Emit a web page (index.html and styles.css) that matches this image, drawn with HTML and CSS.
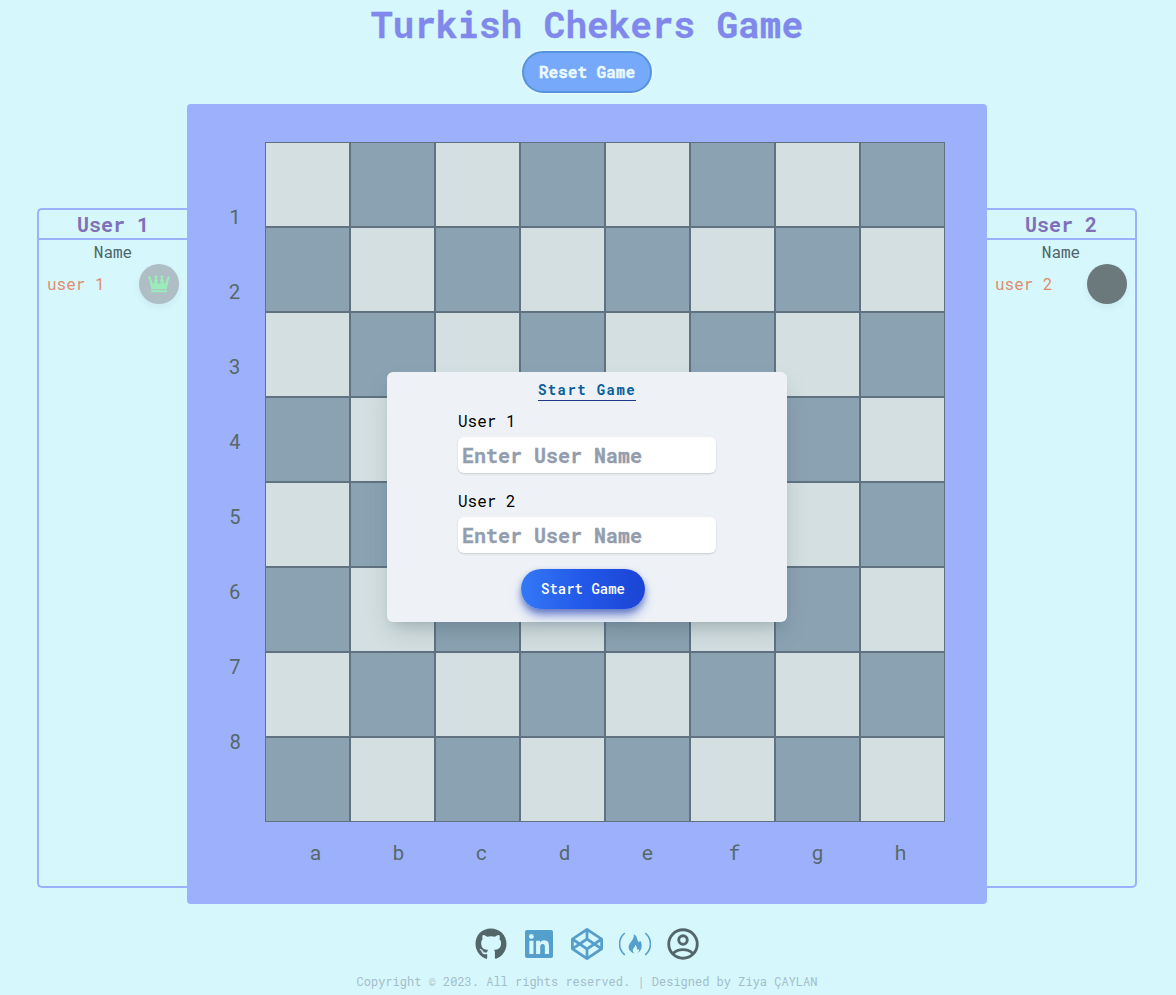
FILE: index.html
```html
<!DOCTYPE html>
<html lang="en">
<head>
<meta charset="utf-8">
<title>Turkish Chekers Game</title>
<link rel="stylesheet" href="styles.css">
</head>
<body>
<div class="page">
  <h1 class="title">Turkish Chekers Game</h1>
  <button class="reset">Reset Game</button>
  <main class="game">
    <section class="player player-left">
      <h2 class="player-title">User 1</h2>
      <div class="player-label">Name</div>
      <div class="player-row"><span>user 1</span>
        <span class="piece piece-light">
          <svg width="22" height="18" viewBox="0 0 22 18" fill="#9aecb9"><circle cx="1.5" cy="2.7" r="1.5"/><circle cx="20.5" cy="2.7" r="1.5"/><circle cx="8" cy="1.8" r="1.6"/><circle cx="14" cy="1.8" r="1.6"/><circle cx="8" cy="6" r="2"/><circle cx="14" cy="6" r="2"/><path d="M1 3 2.4 2.5 5 8.800 7 7.500V2h2v6l2 1 2-1V2h2v5.500l2 1.300 2.600-6.300 1.400.5-2.300 11.300H3.300zM3 15.200h16V17.200H3z"/></svg>
        </span>
      </div>
    </section>
    <section class="board">
      <div class="ranks"><span>1</span><span>2</span><span>3</span><span>4</span><span>5</span><span>6</span><span>7</span><span>8</span></div>
      <div class="side">
        <div class="cells" id="cells"></div>
        <div class="files"><span>a</span><span>b</span><span>c</span><span>d</span><span>e</span><span class="late">f</span><span>g</span><span>h</span></div>
      </div>
      <form class="modal">
        <h3 class="modal-title">Start Game</h3>
        <label class="field">User 1<input type="text" placeholder="Enter User Name"></label>
        <label class="field">User 2<input type="text" placeholder="Enter User Name"></label>
        <button type="button" class="start">Start Game</button>
      </form>
    </section>
    <section class="player player-right">
      <h2 class="player-title">User 2</h2>
      <div class="player-label">Name</div>
      <div class="player-row"><span>user 2</span><span class="piece piece-dark"></span></div>
    </section>
  </main>
  <footer class="footer">
    <div class="links">
      <svg class="icon gray" viewBox="0 0 496 512"><path d="M165.9 397.4c0 2-2.3 3.6-5.2 3.6-3.3.3-5.6-1.3-5.6-3.6 0-2 2.3-3.6 5.2-3.6 3-.3 5.6 1.3 5.6 3.6zm-31.1-4.5c-.7 2 1.3 4.3 4.3 4.9 2.6 1 5.6 0 6.2-2s-1.3-4.3-4.3-5.2c-2.6-.7-5.5.3-6.2 2.3zm44.2-1.7c-2.9.7-4.9 2.6-4.6 4.9.3 2 2.9 3.3 5.9 2.6 2.9-.7 4.9-2.6 4.6-4.6-.3-1.9-3-3.2-5.9-2.9zM244.8 8C106.1 8 0 113.3 0 252c0 110.9 69.8 205.8 169.5 239.2 12.8 2.3 17.3-5.6 17.3-12.1 0-6.2-.3-40.4-.3-61.4 0 0-70 15-84.7-29.8 0 0-11.4-29.1-27.8-36.6 0 0-22.9-15.7 1.6-15.4 0 0 24.9 2 38.6 25.8 21.9 38.6 58.6 27.5 72.9 20.9 2.3-16 8.8-27.1 16-33.7-55.9-6.2-112.3-14.3-112.3-110.5 0-27.5 7.6-41.3 23.6-58.9-2.6-6.5-11.1-33.3 2.6-67.9 20.9-6.5 69 27 69 27 20-5.6 41.5-8.5 62.8-8.5s42.8 2.9 62.8 8.5c0 0 48.1-33.6 69-27 13.7 34.7 5.2 61.4 2.6 67.9 16 17.7 25.8 31.5 25.8 58.9 0 96.5-58.9 104.2-114.8 110.5 9.2 7.9 17 22.9 17 46.4 0 33.7-.3 75.4-.3 83.6 0 6.5 4.6 14.4 17.3 12.1C428.2 457.8 496 362.9 496 252 496 113.3 383.5 8 244.8 8zM97.2 352.9c-1.3 1-1 3.3.7 5.2 1.6 1.6 3.9 2.3 5.2 1 1.3-1 1-3.3-.7-5.2-1.6-1.6-3.9-2.3-5.2-1zm32.4 35.6c-1.6 1.3-1 4.3 1.3 6.2 2.3 2.3 5.2 2.6 6.5 1 1.3-1.3.7-4.3-1.3-6.2-2.2-2.3-5.2-2.6-6.5-1zm-11.4-14.7c-1.6 1-1.6 3.6 0 5.9s4.3 3.3 5.6 2.3c1.6-1.3 1.6-3.9 0-6.2-1.4-2.3-4-3.3-5.6-2z"/></svg>
      <svg class="icon" viewBox="0 0 448 512"><path d="M416 32H31.9C14.3 32 0 46.5 0 64.3v383.4C0 465.5 14.3 480 31.9 480H416c17.6 0 32-14.5 32-32.3V64.3c0-17.8-14.4-32.3-32-32.3zM135.4 416H69V202.2h66.5V416zm-33.2-243c-21.3 0-38.5-17.3-38.5-38.5S80.9 96 102.2 96c21.2 0 38.5 17.3 38.5 38.5 0 21.3-17.2 38.5-38.5 38.5zm282.1 243h-66.4V312c0-24.8-.5-56.7-34.5-56.7-34.6 0-39.9 27-39.9 54.9V416h-66.4V202.2h63.7v29.2h.9c8.9-16.8 30.6-34.5 62.9-34.5 67.2 0 79.7 44.3 79.7 101.9V416z"/></svg>
      <svg class="icon" viewBox="0 0 512 512"><path d="M502.285 159.704l-234-156c-7.987-4.915-16.568-4.943-24.571 0l-234 156C3.714 163.703 0 170.847 0 177.989v155.999c0 7.143 3.714 14.286 9.715 18.286l234 156.022c7.987 4.915 16.568 4.943 24.571 0l234-156.022c6-3.999 9.715-11.143 9.715-18.286V177.989c-.001-7.142-3.715-14.286-9.716-18.285zM278 63.131l172.286 114.858-76.857 51.429L278 165.703V63.131zm-44 0v102.572l-95.429 63.715-76.857-51.429L234 63.131zM44 219.132l55.143 36.857L44 292.847v-73.715zm190 229.715L61.714 333.989l76.857-51.429L234 346.275v102.572zm22-140.858l-77.715-52 77.715-52 77.715 52-77.715 52zm22 140.858V346.275l95.429-63.715 76.857 51.429L278 448.847zm190-156l-55.143-36.857L468 219.132v73.715z"/></svg>
      <svg class="icon" viewBox="0 0 32 32"><path d="M5.3 5.5C-1 11 -1 21 5.3 26.4M26.7 5.5C33 11 33 21 26.7 26.4" fill="none" stroke="#559fcc" stroke-width="1.6" stroke-linecap="round"/><path d="M14.800 6.200c3.600 1.600 3 5 4.500 7.300.7 1.200 2 .3 1.200-1.500 2.300 2.500 2.600 4.700 1.900 8-.5 2.600-2.300 4.300-4.300 5.200 1.400-1.300 2.500-2.900 1.800-4-.8.7-2 .5-2-.7.1-1.700-.5-2.800-1.900-3.800.4 2.700-2.300 3.400-2.200 5.600 0 1.200.5 2.100 1.500 3.100-5-1.900-6.800-5.400-5-9 1.700-3.300 5-5.400 4.500-10.200z"/></svg>
      <svg class="icon outline" viewBox="0 0 24 24"><circle cx="12" cy="12" r="10.7"/><circle cx="12" cy="9" r="3.2"/><path d="M4.8 19c3.6-3.7 10.800-3.7 14.400 0"/></svg>
    </div>
    <p class="copyright">Copyright © 2023. All rights reserved. | Designed by Ziya ÇAYLAN</p>
  </footer>
</div>
<script src="board.js"></script>
</body>
</html>
```
FILE: styles.css
```css
* { box-sizing: border-box; }
html { overflow: hidden; }
body {
  margin: 0;
  background: #d6f7fc;
  color: #56686a;
  font: 16px/24px "Roboto Mono", "DejaVu Sans Mono", "Liberation Mono", monospace;
}
h1, h2, h3, p { margin: 0; }
button, input { font: inherit; }
.page { width: 1174px; height: 995px; display: flex; flex-direction: column; align-items: center; }
.title { font-size: 36px; line-height: 40px; font-weight: 700; color: #8088ec; padding-top: 4px; height: 51px; -webkit-text-stroke: .3px; }
.reset {
  width: 130px; height: 42px; padding: 0;
  border: 2px solid #5594dc; border-radius: 21px;
  background: #76a9fa; color: #ebfaff; font-weight: 700;
  -webkit-text-stroke: .4px;
  box-shadow: 0 0 2px 1px #e9fbff;
}
.game { display: flex; align-items: flex-start; margin-top: 11px; }
.player { width: 150px; height: 680px; margin-top: 104px; border: 2px solid #9db0fb; }
.player-left { border-right: 0; border-radius: 5px 0 0 5px; }
.player-right { border-left: 0; border-radius: 0 5px 5px 0; }
.player-title { height: 30px; font-size: 20px; line-height: 28px; text-align: center; color: #7f70b8; border-bottom: 2px solid #9db0fb; }
.player-label { text-align: center; color: #50666a; }
.player-row { display: flex; align-items: center; justify-content: space-between; padding: 0 8px; color: #df8d6b; }
.piece { width: 40px; height: 40px; border-radius: 50%; display: flex; align-items: center; justify-content: center; box-shadow: 0 3px 6px rgba(60, 100, 110, .08); }
.piece-light { background: #afbdc5; }
.piece-dark { background: #6b787c; }
.board { position: relative; display: flex; width: 800px; height: 800px; padding-top: 38px; border-radius: 4px; background: #9db0fb; }
.ranks { width: 78px; padding: 37px 0 0 18px; font-size: 20px; line-height: 75px; text-align: center; }
.ranks span { display: block; height: 75px; }
.cells { display: grid; grid-template-columns: repeat(8, 85px); grid-auto-rows: 85px; }
.cell { border: 1px solid #607280; background: #d3dfe0; }
.cell.dark { background: #8ba2b2; }
.files { display: flex; gap: 71px; padding: 14px 0 0 44.5px; font-size: 20px; line-height: 32px; }
.files span { width: 12px; text-align: center; }
.files .late { margin-left: 4px; }
/* Dialog floats over the centre of the board */
.modal {
  position: absolute; left: 200px; top: 268px; width: 400px; height: 250px;
  display: flex; flex-direction: column; align-items: center;
  padding-top: 8px; border-radius: 6px; background: #eef2f7; color: #000;
  box-shadow: 0 12px 25px -5px rgba(60, 80, 90, .25), 0 8px 10px -6px rgba(60, 80, 90, .15);
}
.modal-title { font-size: 14px; line-height: 20px; letter-spacing: .1em; color: #075f9c; border-bottom: 1px solid #1e3a8a; }
.field { display: flex; flex-direction: column; width: 258px; height: 80px; padding-top: 8px; }
.field input {
  width: 100%; height: 36px; margin-top: 4px; padding: 4px; border: 0; border-radius: 6px;
  background: #fff; font-size: 20px; font-weight: 700; box-shadow: 0 1px 2px rgba(0, 0, 0, .16);
}
.field input::placeholder { color: #929dad; opacity: 1; -webkit-text-stroke: .3px; }
.start {
  width: 124px; height: 40px; margin: 8px 8px 0 0; padding: 0; border: 0; border-radius: 20px;
  color: #fff; font-size: 14px; font-weight: 500;
  background: linear-gradient(to right, #3478f6, #2258e8 50%, #1b44d4);
  box-shadow: 0 8px 12px -2px rgba(30, 64, 190, .5), 0 3px 6px rgba(30, 50, 150, .4);
}
.footer { display: flex; flex-direction: column; align-items: center; padding-top: 24px; }
.links { display: flex; gap: 16px; }
.icon { width: 32px; height: 32px; fill: #559fcc; }
.gray { fill: #53676a; }
.outline { fill: none; stroke: #53676a; stroke-width: 2.15; }
.copyright { margin-top: 13px; font-size: 12px; line-height: 16px; color: #a5bdc9; }
```
FILE: board.js
```js
const cells = document.getElementById('cells');
for (let i = 0; i < 64; i++) {
  const cell = document.createElement('div');
  const dark = (Math.floor(i / 8) + i) % 2 === 1;
  cell.className = dark ? 'cell dark' : 'cell';
  cells.appendChild(cell);
}
```
